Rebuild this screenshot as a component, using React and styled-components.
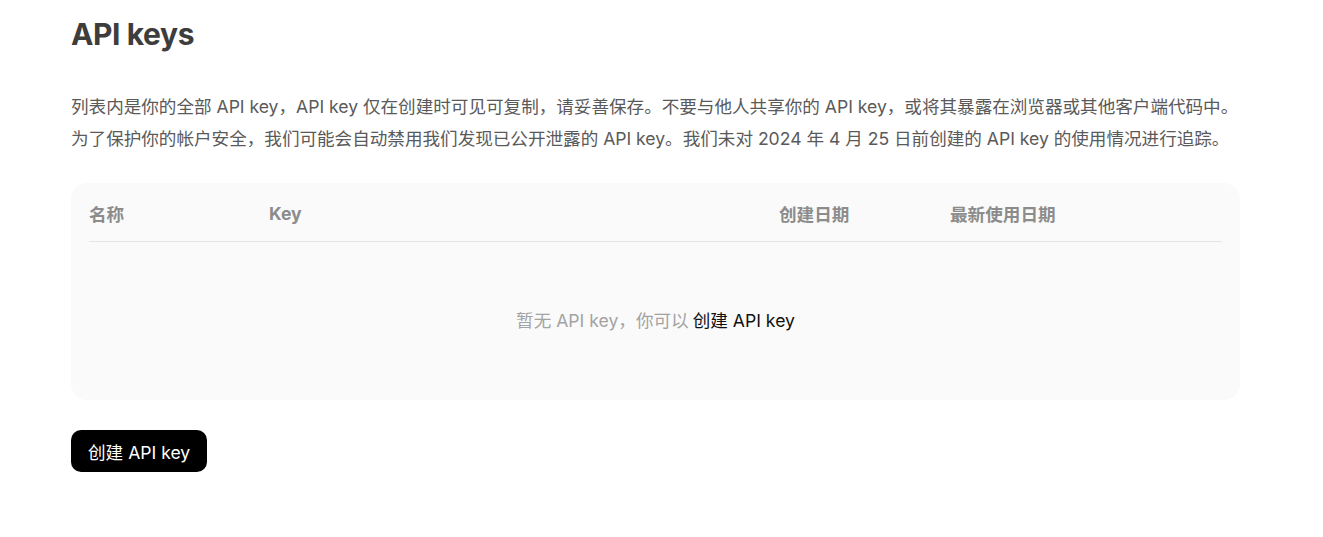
import React from 'react';
import styled, { createGlobalStyle } from 'styled-components';

const GlobalStyle = createGlobalStyle`
  body {
    margin: 0;
    background: #fff;
    font-family: Inter, "Noto Sans CJK SC", sans-serif;
    color: #404040;
  }
`;

const Page = styled.div`
  width: 1169px;
  padding: 14px 0 0 71px;
`;

const Title = styled.h1`
  margin: 0;
  font-size: 30px;
  line-height: 40px;
  font-weight: 700;
  color: #3d3d3d;
  letter-spacing: -0.4px;
`;

const Intro = styled.p`
  margin: 37px 0 0;
  font-size: 17.6px;
  line-height: 32px;
  color: #5a5a5a;
  letter-spacing: -0.02px;
`;

const Card = styled.div`
  margin-top: 28px;
  background: #fafafa;
  border-radius: 16px;
  padding: 0 18px;
`;

const Row = styled.div`
  display: grid;
  grid-template-columns: 180px 510px 171px 1fr;
  align-items: center;
  box-sizing: border-box;
  height: 59px;
  padding-top: 3px;
  border-bottom: 1px solid #e5e5e5;
`;

const HeadCell = styled.div`
  font-size: 17.6px;
  font-weight: 700;
  color: #8c8c8c;
`;

const Empty = styled.div`
  height: 158px;
  padding-bottom: 4px;
  box-sizing: border-box;
  display: flex;
  align-items: center;
  justify-content: center;
  font-size: 17.6px;
  color: #a3a3a3;
`;

const Link = styled.a`
  color: #111;
  margin-left: 4px;
  cursor: pointer;
`;

const Button = styled.button`
  margin-top: 30px;
  height: 42px;
  padding: 0 17px;
  border: none;
  border-radius: 10px;
  background: #000;
  color: #fff;
  font-family: inherit;
  font-size: 17.6px;
  cursor: pointer;
`;

const columns = ['名称', 'Key', '创建日期', '最新使用日期'];

export default function App() {
  return (
    <>
      <GlobalStyle />
      <Page>
        <Title>API keys</Title>
        <Intro>
          列表内是你的全部 API key，API key 仅在创建时可见可复制，请妥善保存。不要与他人共享你的 API key，或将其暴露在浏览器或其他客户端代码中。
          <br />
          为了保护你的帐户安全，我们可能会自动禁用我们发现已公开泄露的 API key。我们未对 2024 年 4 月 25 日前创建的 API key 的使用情况进行追踪。
        </Intro>
        <Card>
          <Row>
            {columns.map((c) => (
              <HeadCell key={c}>{c}</HeadCell>
            ))}
          </Row>
          <Empty>
            暂无 API key，你可以<Link>创建 API key</Link>
          </Empty>
        </Card>
        <Button>创建 API key</Button>
      </Page>
    </>
  );
}
